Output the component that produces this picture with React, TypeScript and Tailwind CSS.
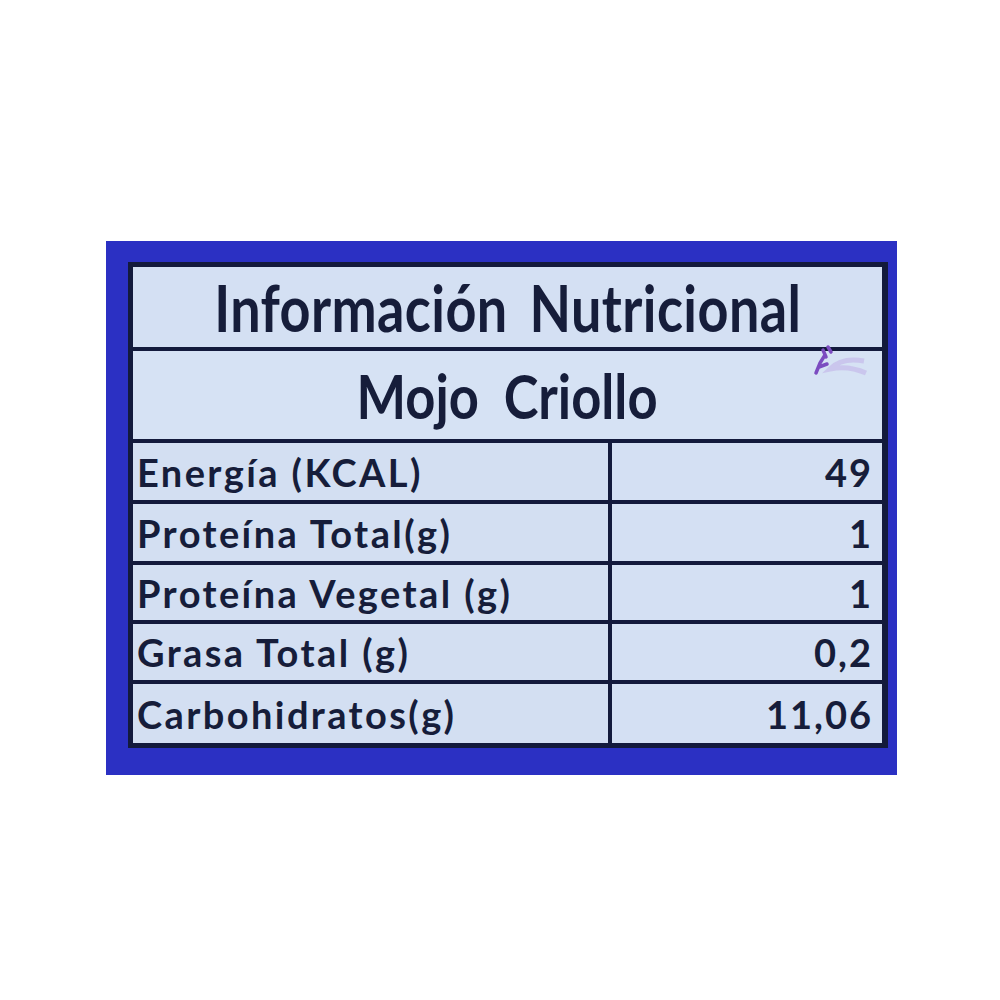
const rows = [
  { label: "Energía (KCAL)", value: "49", h: "h-[57px]" },
  { label: "Proteína Total(g)", value: "1", h: "h-[57px]" },
  { label: "Proteína Vegetal (g)", value: "1", h: "h-[55px]" },
  { label: "Grasa Total (g)", value: "0,2", h: "h-[56px]" },
  { label: "Carbohidratos(g)", value: "11,06", h: "h-[59px]" },
];

export default function App() {
  return (
    <div className="w-[1000px] h-[1000px] bg-white pt-[241px] pl-[106px]" style={{ fontFamily: "Lato, 'Open Sans', sans-serif" }}>
      {/* blue label */}
      <div className="relative w-[791px] h-[534px] bg-[#2b30c3] pt-[21px] pl-[22px]">
        <div className="w-[760px] border-[5px] border-[#131a3c] bg-[#131a3c] grid grid-cols-[475px_270px] gap-[4px] text-[#161d3a] font-bold">
          {/* header */}
          <div className="col-span-2 h-[80px] bg-[#d4e0f3] flex items-center justify-center">
            <span className="inline-block text-[65px] leading-none scale-x-[0.83] whitespace-nowrap tracking-[0.5px] [word-spacing:10px]">
              Información Nutricional
            </span>
          </div>
          <div className="col-span-2 h-[88px] bg-[#d6e2f4] flex items-center justify-center">
            <span className="inline-block text-[61px] leading-none scale-x-[0.86] whitespace-nowrap [word-spacing:14px]">
              Mojo Criollo
            </span>
          </div>

          {rows.map((r) => (
            <div key={r.label} className="contents">
              <div className={`${r.h} bg-[#d3dff2] flex items-center pl-[4px]`}>
                <span className="text-[38px] leading-none whitespace-nowrap tracking-[2.4px]">{r.label}</span>
              </div>
              <div className={`${r.h} bg-[#d4e0f3] flex items-center justify-end pr-[11px]`}>
                <span className="text-[38px] leading-none tracking-[2px] -mr-[2px]">{r.value}</span>
              </div>
            </div>
          ))}
        </div>

        {/* purple ink smudge */}
        <svg className="absolute left-[702px] top-[98px]" width="72" height="44" viewBox="0 0 72 44">
          <path d="M58 34 Q40 26 22 30 Q34 18 56 22" stroke="#c2b4e8" strokeWidth="5" fill="none" opacity="0.6" />
          <path d="M8 34 L12 24 L17 16 M11 28 L19 25 M15 11 L18 18 M20 8 L23 13" stroke="#7c4cc0" strokeWidth="3.5" fill="none" strokeLinecap="round" />
        </svg>
      </div>
    </div>
  );
}
